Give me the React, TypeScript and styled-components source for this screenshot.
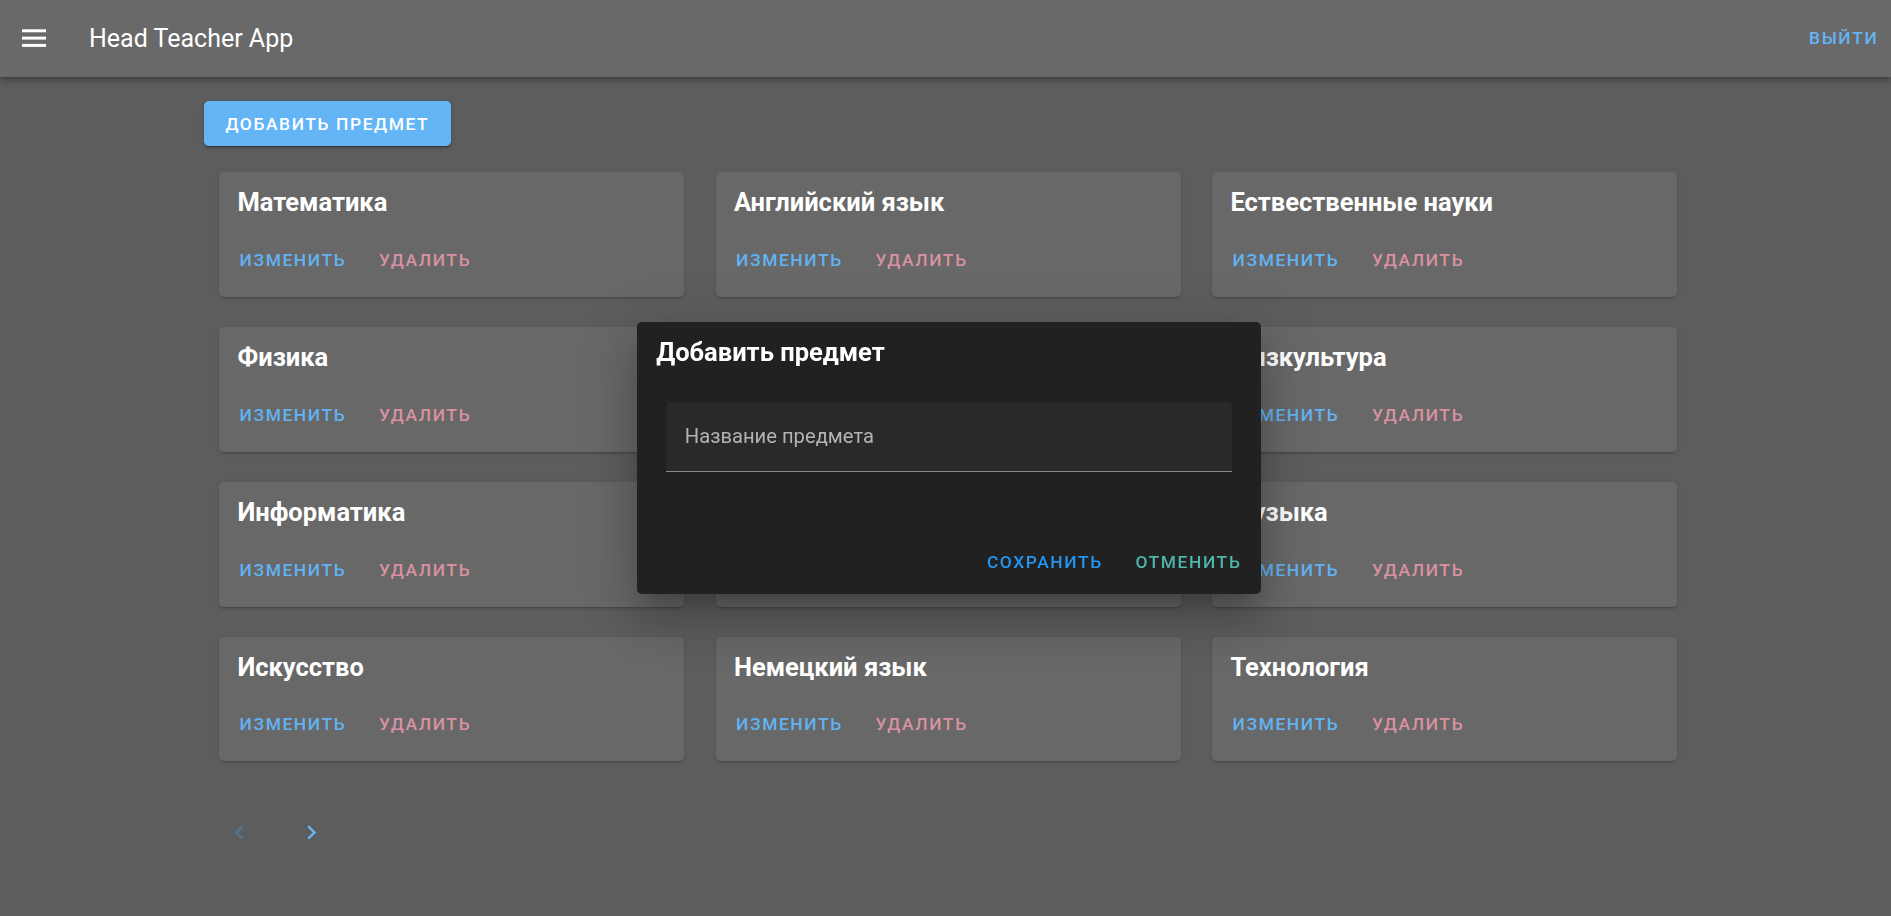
import React from "react";
import styled, { createGlobalStyle } from "styled-components";

const GlobalStyle = createGlobalStyle`
  html, body {
    margin: 0;
    padding: 0;
    background: #5d5d5d;
    font-family: Roboto, "Noto Sans", "Liberation Sans", sans-serif;
  }
  body {
    min-height: 916px;
    overflow: hidden;
  }
  * { box-sizing: border-box; }
`;

const Page = styled.div`
  min-height: 916px;
  background: #5d5d5d;
`;

const AppBar = styled.header`
  height: 76.8px;
  background: #696969;
  display: flex;
  align-items: center;
  padding: 0 12.7px 0 22px;
  box-shadow: 0 2px 4px -1px rgba(0, 0, 0, 0.2), 0 4px 5px 0 rgba(0, 0, 0, 0.14),
    0 1px 10px 0 rgba(0, 0, 0, 0.12);
  position: relative;
  z-index: 1;
`;

const MenuButton = styled.button`
  width: 24px;
  height: 18px;
  padding: 0;
  border: none;
  background: none;
  display: flex;
  color: #fff;
  margin-top: -1px;
`;

const AppTitle = styled.h1`
  margin: 0 0 0 43px;
  font-size: 25px;
  font-weight: 400;
  line-height: 1;
  color: #fff;
`;

const TextButton = styled.button<{ $tone: string }>`
  height: 43.2px;
  padding: 0 10.6px;
  border: none;
  background: none;
  color: ${(p) => p.$tone};
  font-family: Roboto, "Noto Sans", sans-serif;
  font-size: 17.4px;
  font-weight: 500;
  letter-spacing: 1.6px;
  text-transform: uppercase;
  cursor: pointer;
  display: inline-flex;
  align-items: center;
`;

const LogoutButton = styled(TextButton)`
  margin-left: auto;
  padding: 0;
`;

const Main = styled.main`
  padding: 24.5px 0 0 204px;
`;

const AddButton = styled.button`
  height: 44.6px;
  padding: 0 21.4px;
  border: none;
  border-radius: 4.8px;
  background: #64b5f6;
  color: #fff;
  font-family: Roboto, "Noto Sans", sans-serif;
  font-size: 17.4px;
  font-weight: 500;
  letter-spacing: 1.6px;
  text-transform: uppercase;
  box-shadow: 0 3px 1px -2px rgba(0, 0, 0, 0.2), 0 2px 2px 0 rgba(0, 0, 0, 0.14),
    0 1px 5px 0 rgba(0, 0, 0, 0.12);
`;

const Grid = styled.section`
  margin: 26.1px 0 0 15px;
  display: grid;
  grid-template-columns: repeat(3, 465px);
  column-gap: 31.5px;
  row-gap: 30px;
`;

const Card = styled.article`
  background: #686868;
  border-radius: 4.8px;
  padding: 16.4px 0 15.5px 0;
  box-shadow: 0 3px 1px -2px rgba(0, 0, 0, 0.12), 0 2px 2px 0 rgba(0, 0, 0, 0.08),
    0 1px 5px 0 rgba(0, 0, 0, 0.07);
`;

const CardTitle = styled.h2`
  margin: 0;
  padding: 0 18.4px;
  font-size: 25.5px;
  font-weight: 700;
  line-height: 28.8px;
  color: #fff;
`;

const CardActions = styled.div`
  display: flex;
  gap: 11.5px;
  padding-left: 10px;
  margin-top: 21px;
`;

const Pagination = styled.nav`
  display: flex;
  gap: 31.2px;
  margin: 50.5px 0 0 15.4px;
`;

const PageNav = styled.button<{ $active: boolean }>`
  width: 40.8px;
  height: 40.8px;
  padding: 0;
  border: none;
  background: none;
  display: flex;
  align-items: center;
  justify-content: center;
  color: ${(p) => (p.$active ? "#64b5f6" : "#56738c")};
`;

const Overlay = styled.div`
  position: fixed;
  inset: 0;
  display: flex;
  align-items: center;
  justify-content: center;
  padding-left: 7px;
  z-index: 10;
`;

const Dialog = styled.div`
  width: 624px;
  background: #212121;
  border-radius: 4.8px;
  box-shadow: 0 13px 18px -8px rgba(0, 0, 0, 0.2), 0 29px 46px 4px rgba(0, 0, 0, 0.14),
    0 11px 55px 10px rgba(0, 0, 0, 0.12);
`;

const DialogTitle = styled.h2`
  margin: 0;
  padding: 16px 19.2px 0;
  font-size: 25.5px;
  font-weight: 700;
  line-height: 28.8px;
  color: #fff;
`;

const Field = styled.label`
  margin: 35px 29.2px 0 28.8px;
  height: 69.8px;
  display: flex;
  align-items: center;
  padding: 0 0 0 19px;
  background: #292929;
  border-bottom: 1px solid #8a8a8a;
  border-radius: 4.8px 4.8px 0 0;
  font-size: 20.2px;
  line-height: 24px;
  color: #b3b3b3;
`;

const DialogActions = styled.div`
  display: flex;
  justify-content: flex-end;
  gap: 11.5px;
  margin-top: 69px;
  padding: 0 9px 10.25px 0;
`;

const subjects = [
  "Математика",
  "Английский язык",
  "Ествественные науки",
  "Физика",
  "История",
  "Физкультура",
  "Информатика",
  "Русский язык",
  "Музыка",
  "Искусство",
  "Немецкий язык",
  "Технология",
];

const ChevronLeft = () => (
  <svg width="28.8" height="28.8" viewBox="0 0 24 24" fill="currentColor">
    <path d="M15.41,16.58L10.83,12L15.41,7.41L14,6L8,12L14,18L15.41,16.58Z" />
  </svg>
);

const ChevronRight = () => (
  <svg width="28.8" height="28.8" viewBox="0 0 24 24" fill="currentColor">
    <path d="M8.59,16.58L13.17,12L8.59,7.41L10,6L16,12L10,18L8.59,16.58Z" />
  </svg>
);

const MenuIcon = () => (
  <svg width="24" height="18" viewBox="0 0 24 18" fill="currentColor">
    <rect x="0" y="0.3" width="24" height="3" />
    <rect x="0" y="7.6" width="24" height="3" />
    <rect x="0" y="14.9" width="24" height="3" />
  </svg>
);

export default function App() {
  return (
    <Page>
      <GlobalStyle />
      <AppBar>
        <MenuButton aria-label="menu">
          <MenuIcon />
        </MenuButton>
        <AppTitle>Head Teacher App</AppTitle>
        <LogoutButton $tone="#64b5f6">Выйти</LogoutButton>
      </AppBar>
      <Main>
        <AddButton>Добавить предмет</AddButton>
        <Grid>
          {subjects.map((s) => (
            <Card key={s}>
              <CardTitle>{s}</CardTitle>
              <CardActions>
                <TextButton $tone="#62b3f3">Изменить</TextButton>
                <TextButton $tone="#da92a2">Удалить</TextButton>
              </CardActions>
            </Card>
          ))}
        </Grid>
        <Pagination>
          <PageNav $active={false}>
            <ChevronLeft />
          </PageNav>
          <PageNav $active={true}>
            <ChevronRight />
          </PageNav>
        </Pagination>
      </Main>
      <Overlay>
        <Dialog>
          <DialogTitle>Добавить предмет</DialogTitle>
          <Field>Название предмета</Field>
          <DialogActions>
            <TextButton $tone="#2196f3">Сохранить</TextButton>
            <TextButton $tone="#4db6ac">Отменить</TextButton>
          </DialogActions>
        </Dialog>
      </Overlay>
    </Page>
  );
}
